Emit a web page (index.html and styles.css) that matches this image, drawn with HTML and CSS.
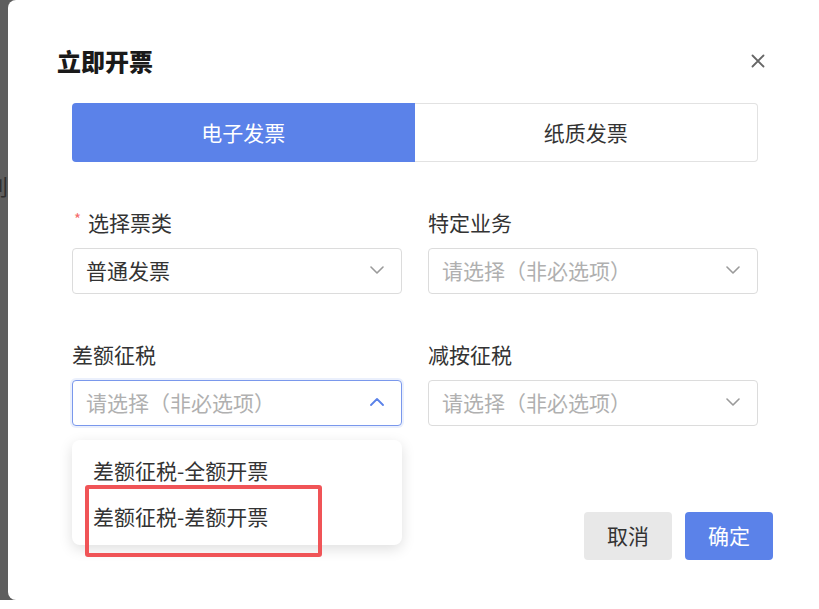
FILE: index.html
```html
<!DOCTYPE html>
<html lang="zh-CN">
<head>
<meta charset="utf-8">
<title>立即开票</title>
<link rel="stylesheet" href="styles.css">
</head>
<body>
<div class="screen">
  <div class="strip"><span class="strip-text">别</span></div>
  <div class="dialog">
    <div class="dialog-header">
      <h1 class="dialog-title">立即开票</h1>
      <span class="close-btn">
        <svg width="14" height="14" viewBox="0 0 14 14"><path d="M1.5 1.5 L12.5 12.5 M12.5 1.5 L1.5 12.5" stroke="#666" stroke-width="1.8" stroke-linecap="round" fill="none"/></svg>
      </span>
    </div>
    <div class="tabs">
      <div class="tab tab-active">电子发票</div>
      <div class="tab">纸质发票</div>
    </div>
    <div class="form">
      <div class="field">
        <div class="label"><span class="req">*</span>选择票类</div>
        <div class="select">
          <span class="value">普通发票</span>
          <svg class="chev" width="14" height="8" viewBox="0 0 14 8"><path d="M1 1 L7 7 L13 1" stroke="#9a9a9a" stroke-width="1.6" fill="none" stroke-linecap="round" stroke-linejoin="round"/></svg>
        </div>
      </div>
      <div class="field">
        <div class="label">特定业务</div>
        <div class="select">
          <span class="placeholder">请选择（非必选项）</span>
          <svg class="chev" width="14" height="8" viewBox="0 0 14 8"><path d="M1 1 L7 7 L13 1" stroke="#9a9a9a" stroke-width="1.6" fill="none" stroke-linecap="round" stroke-linejoin="round"/></svg>
        </div>
      </div>
      <div class="field">
        <div class="label">差额征税</div>
        <div class="select-wrap">
          <div class="select select-focus">
            <span class="placeholder">请选择（非必选项）</span>
            <svg class="chev" width="14" height="8" viewBox="0 0 14 8"><path d="M1 7 L7 1 L13 7" stroke="#5b82e9" stroke-width="1.8" fill="none" stroke-linecap="round" stroke-linejoin="round"/></svg>
          </div>
          <div class="dropdown">
            <div class="option">差额征税-全额开票</div>
            <div class="option">差额征税-差额开票</div>
            <div class="highlight-box"></div>
          </div>
        </div>
      </div>
      <div class="field">
        <div class="label">减按征税</div>
        <div class="select">
          <span class="placeholder">请选择（非必选项）</span>
          <svg class="chev" width="14" height="8" viewBox="0 0 14 8"><path d="M1 1 L7 7 L13 1" stroke="#9a9a9a" stroke-width="1.6" fill="none" stroke-linecap="round" stroke-linejoin="round"/></svg>
        </div>
      </div>
    </div>
    <div class="footer">
      <button class="btn btn-cancel">取消</button>
      <button class="btn btn-ok">确定</button>
    </div>
  </div>
</div>
</body>
</html>
```

FILE: styles.css
```css
* { box-sizing: border-box; }
html, body {
  margin: 0;
  padding: 0;
  background: #ffffff;
  font-family: "Noto Sans CJK SC", "Noto Sans", sans-serif;
  color: #333333;
}
.screen {
  display: flex;
  height: 600px;
  background: #5e5e5e;
}
.strip {
  width: 8px;
  flex: none;
  overflow: hidden;
  display: flex;
  justify-content: flex-end;
  align-items: flex-start;
  padding-top: 171px;
}
.strip-text {
  flex: none;
  font-size: 22px;
  line-height: 28px;
  color: #2e2e2e;
}
.dialog {
  flex: 1;
  background: #ffffff;
  border-radius: 8px 0 0 8px;
  position: relative;
}
.dialog-header {
  display: flex;
  justify-content: space-between;
  align-items: center;
  padding: 45px 54px 0 49px;
}
.dialog-title {
  margin: 0;
  font-size: 24px;
  line-height: 32px;
  font-weight: 900;
  color: #1a1a1a;
}
.close-btn {
  display: flex;
  width: 14px;
  height: 14px;
  margin-top: -1px;
}
.tabs {
  display: flex;
  margin: 26px 61px 0 64px;
  height: 59px;
}
.tab {
  flex: 1;
  display: flex;
  align-items: center;
  justify-content: center;
  font-size: 21px;
  color: #333333;
  border: 1px solid #e2e2e2;
  border-left: none;
  border-radius: 0 4px 4px 0;
  background: #ffffff;
  padding-bottom: 2px;
}
.tab-active {
  background: #5b82e9;
  color: #ffffff;
  border: none;
  border-radius: 4px 0 0 4px;
}
.form {
  display: grid;
  grid-template-columns: 330px 330px;
  column-gap: 26px;
  row-gap: 46px;
  margin: 46px 0 0 64px;
}
.field {
  display: flex;
  flex-direction: column;
}
.label {
  font-size: 21px;
  line-height: 28px;
  color: #333333;
  margin-bottom: 12px;
  display: flex;
  align-items: flex-start;
}
.req {
  color: #f56c6c;
  font-size: 15px;
  line-height: 18px;
  margin: 2px 7px 0 2px;
}
.select-wrap {
  position: relative;
}
.select {
  height: 46px;
  border: 1px solid #dcdcdc;
  border-radius: 4px;
  display: flex;
  align-items: center;
  justify-content: space-between;
  padding: 0 17px 2px 13px;
  background: #ffffff;
}
.select-focus {
  border-color: #7a98ec;
  box-shadow: 0 0 0 2px rgba(91, 130, 233, 0.12);
}
.value {
  font-size: 21px;
  color: #333333;
}
.placeholder {
  font-size: 21px;
  color: #b0b0b0;
}
.chev {
  flex: none;
}
.dropdown {
  position: absolute;
  top: calc(100% + 14px);
  left: 0;
  width: 100%;
  background: #ffffff;
  border-radius: 8px;
  box-shadow: 0 4px 14px rgba(0, 0, 0, 0.13);
  padding: 7px 0 6px;
  z-index: 5;
}
.option {
  height: 46px;
  display: flex;
  align-items: center;
  padding-left: 21px;
  font-size: 21px;
  color: #333333;
}
.highlight-box {
  position: absolute;
  left: 13px;
  top: 45px;
  width: 237px;
  height: 72px;
  border: 4px solid #f05457;
  border-radius: 3px;
}
.footer {
  display: flex;
  justify-content: flex-end;
  gap: 13px;
  margin-top: 86px;
  padding-right: 46px;
}
.btn {
  width: 88px;
  height: 48px;
  border: none;
  border-radius: 4px;
  font-family: "Noto Sans CJK SC", "Noto Sans", sans-serif;
  font-size: 21px;
  padding: 0 0 2px;
}
.btn-cancel {
  background: #e8e8e8;
  color: #333333;
}
.btn-ok {
  background: #5b82e9;
  color: #ffffff;
}
```
